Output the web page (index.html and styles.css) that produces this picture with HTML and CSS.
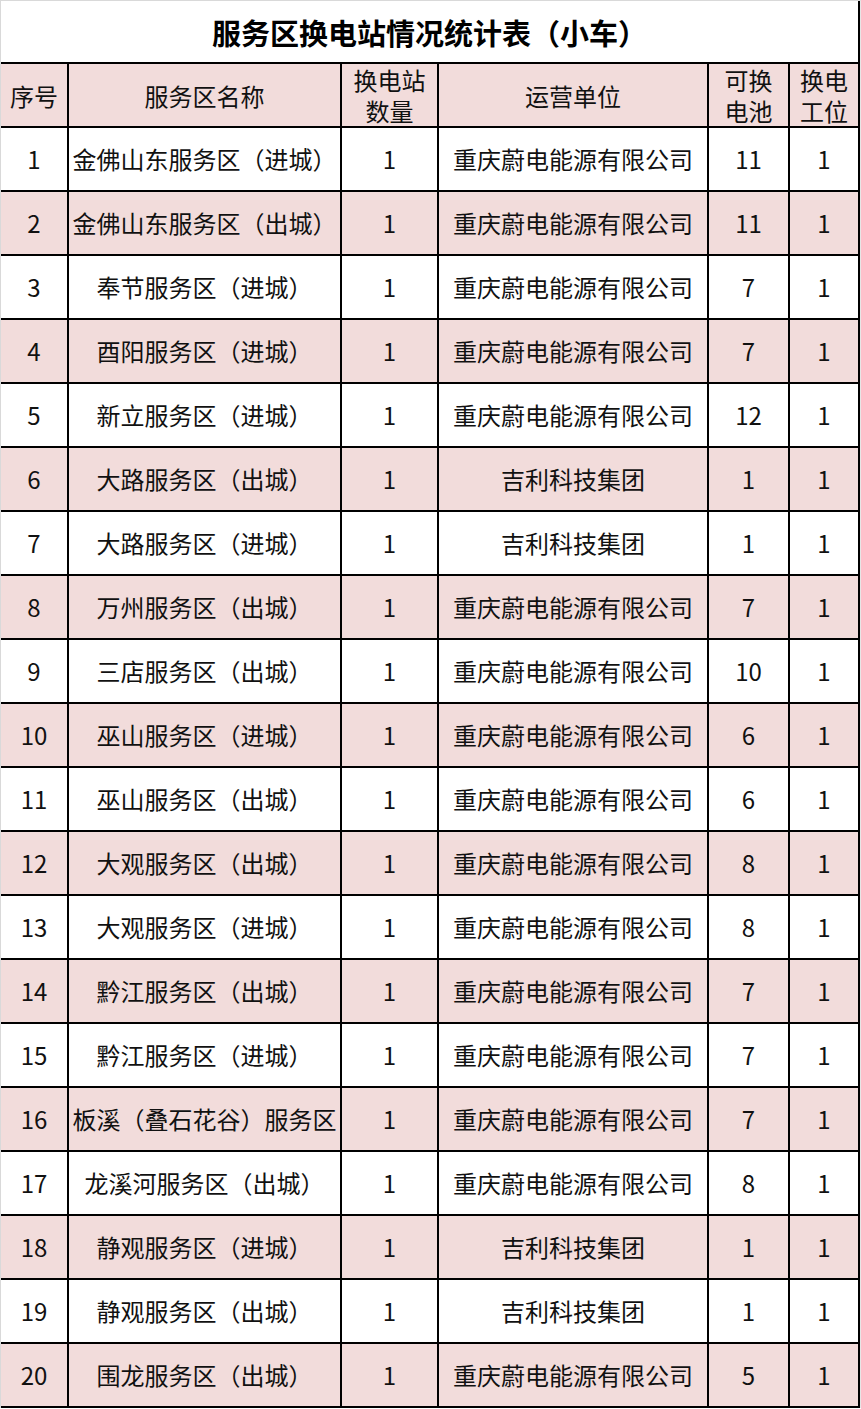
FILE: index.html
```html
<!DOCTYPE html>
<html lang="zh-CN">
<head>
<meta charset="utf-8">
<title>服务区换电站情况统计表（小车）</title>
<link rel="stylesheet" href="styles.css">
</head>
<body>
<div class="sheet">
  <div class="title">服务区换电站情况统计表（小车）</div>
  <div class="row head">
    <div class="c">序号</div><div class="c">服务区名称</div><div class="c">换电站<br>数量</div><div class="c">运营单位</div><div class="c">可换<br>电池</div><div class="c">换电<br>工位</div>
  </div>
  <div class="row"><div class="c">1</div><div class="c">金佛山东服务区（进城）</div><div class="c">1</div><div class="c">重庆蔚电能源有限公司</div><div class="c">11</div><div class="c">1</div></div>
  <div class="row alt"><div class="c">2</div><div class="c">金佛山东服务区（出城）</div><div class="c">1</div><div class="c">重庆蔚电能源有限公司</div><div class="c">11</div><div class="c">1</div></div>
  <div class="row"><div class="c">3</div><div class="c">奉节服务区（进城）</div><div class="c">1</div><div class="c">重庆蔚电能源有限公司</div><div class="c">7</div><div class="c">1</div></div>
  <div class="row alt"><div class="c">4</div><div class="c">酉阳服务区（进城）</div><div class="c">1</div><div class="c">重庆蔚电能源有限公司</div><div class="c">7</div><div class="c">1</div></div>
  <div class="row"><div class="c">5</div><div class="c">新立服务区（进城）</div><div class="c">1</div><div class="c">重庆蔚电能源有限公司</div><div class="c">12</div><div class="c">1</div></div>
  <div class="row alt"><div class="c">6</div><div class="c">大路服务区（出城）</div><div class="c">1</div><div class="c">吉利科技集团</div><div class="c">1</div><div class="c">1</div></div>
  <div class="row"><div class="c">7</div><div class="c">大路服务区（进城）</div><div class="c">1</div><div class="c">吉利科技集团</div><div class="c">1</div><div class="c">1</div></div>
  <div class="row alt"><div class="c">8</div><div class="c">万州服务区（出城）</div><div class="c">1</div><div class="c">重庆蔚电能源有限公司</div><div class="c">7</div><div class="c">1</div></div>
  <div class="row"><div class="c">9</div><div class="c">三店服务区（出城）</div><div class="c">1</div><div class="c">重庆蔚电能源有限公司</div><div class="c">10</div><div class="c">1</div></div>
  <div class="row alt"><div class="c">10</div><div class="c">巫山服务区（进城）</div><div class="c">1</div><div class="c">重庆蔚电能源有限公司</div><div class="c">6</div><div class="c">1</div></div>
  <div class="row"><div class="c">11</div><div class="c">巫山服务区（出城）</div><div class="c">1</div><div class="c">重庆蔚电能源有限公司</div><div class="c">6</div><div class="c">1</div></div>
  <div class="row alt"><div class="c">12</div><div class="c">大观服务区（出城）</div><div class="c">1</div><div class="c">重庆蔚电能源有限公司</div><div class="c">8</div><div class="c">1</div></div>
  <div class="row"><div class="c">13</div><div class="c">大观服务区（进城）</div><div class="c">1</div><div class="c">重庆蔚电能源有限公司</div><div class="c">8</div><div class="c">1</div></div>
  <div class="row alt"><div class="c">14</div><div class="c">黔江服务区（出城）</div><div class="c">1</div><div class="c">重庆蔚电能源有限公司</div><div class="c">7</div><div class="c">1</div></div>
  <div class="row"><div class="c">15</div><div class="c">黔江服务区（进城）</div><div class="c">1</div><div class="c">重庆蔚电能源有限公司</div><div class="c">7</div><div class="c">1</div></div>
  <div class="row alt"><div class="c">16</div><div class="c">板溪（叠石花谷）服务区</div><div class="c">1</div><div class="c">重庆蔚电能源有限公司</div><div class="c">7</div><div class="c">1</div></div>
  <div class="row"><div class="c">17</div><div class="c">龙溪河服务区（出城）</div><div class="c">1</div><div class="c">重庆蔚电能源有限公司</div><div class="c">8</div><div class="c">1</div></div>
  <div class="row alt"><div class="c">18</div><div class="c">静观服务区（进城）</div><div class="c">1</div><div class="c">吉利科技集团</div><div class="c">1</div><div class="c">1</div></div>
  <div class="row"><div class="c">19</div><div class="c">静观服务区（出城）</div><div class="c">1</div><div class="c">吉利科技集团</div><div class="c">1</div><div class="c">1</div></div>
  <div class="row alt"><div class="c">20</div><div class="c">围龙服务区（出城）</div><div class="c">1</div><div class="c">重庆蔚电能源有限公司</div><div class="c">5</div><div class="c">1</div></div>
</div>
</body>
</html>
```
FILE: styles.css
```css
html, body {
  margin: 0;
  padding: 0;
  background: #ffffff;
  overflow: hidden;
}

.sheet {
  width: 861px;
  box-sizing: border-box;
  display: grid;
  grid-template-columns: 66px 271px 95px 268px 79px 68px;
  grid-template-rows: 61px 62px repeat(20, 62px);
  gap: 2px;
  background: #000000;
  border-left: 1px solid #d9d9d9;
  border-top: 1px solid #d9d9d9;
  border-right: 1px solid #e6e6e6;
  padding-right: 2px;
  padding-bottom: 2px;
  font-family: "Noto Sans CJK SC", "Noto Sans", sans-serif;
  color: #111111;
}

.title {
  grid-column: 1 / -1;
  background: #ffffff;
  display: flex;
  align-items: center;
  justify-content: center;
  font-size: 29px;
  font-weight: 700;
  line-height: 1;
  padding-top: 1px;
  color: #000000;
}

.row {
  display: contents;
}

.c {
  background: #ffffff;
  display: flex;
  align-items: center;
  justify-content: center;
  text-align: center;
  font-size: 24px;
  line-height: 32px;
  white-space: nowrap;
}

.head .c {
  line-height: 31px;
}

.head .c,
.alt .c {
  background: #f2dcdb;
}
```
